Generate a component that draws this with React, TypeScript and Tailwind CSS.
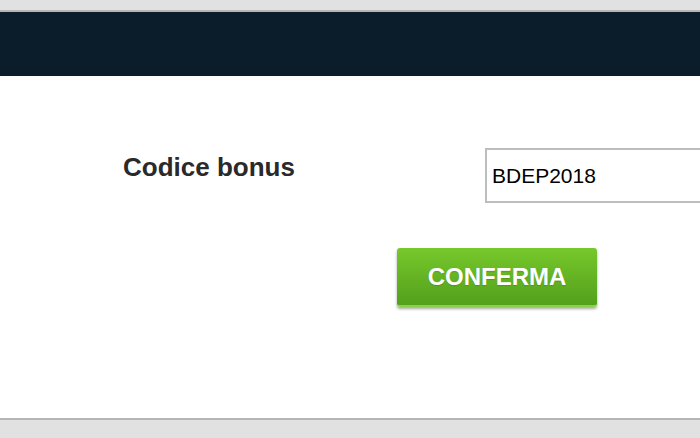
export default function App() {
  return (
    <div className="h-[438px] w-[700px] overflow-hidden flex flex-col bg-white font-['Liberation_Sans',Arial,sans-serif]">
      {/* top chrome */}
      <div className="h-[10px] bg-[#e1e1e1] border-b-2 border-[#b5b5b5] box-content" />
      <div className="h-[64px] bg-[#0b1d2b]" />

      {/* bonus form */}
      <div className="h-[342px] flex flex-col">
        <div className="flex items-start pt-[72px]">
          <div className="w-[485px] shrink-0 pl-[123px] mt-[4px] whitespace-nowrap text-[26px] leading-[30px] font-bold text-[#2a2a2a]">
            Codice bonus
          </div>
          <input
            className="w-[260px] h-[55px] shrink-0 border-2 border-[#bdbdbd] pl-[5px] text-[21px] text-black outline-none"
            defaultValue="BDEP2018"
          />
        </div>
        <div className="mt-[45px] pl-[397px]">
          <button className="w-[200px] h-[59px] rounded-[3px] bg-gradient-to-b from-[#77c82c] to-[#53a01b] border-b-2 border-[#8bd14a] shadow-[0_2px_3px_rgba(0,0,0,0.35)] text-white text-[24px] font-bold [text-shadow:0_1px_1px_rgba(0,0,0,0.15)]">
            CONFERMA
          </button>
        </div>
      </div>

      {/* footer */}
      <div className="flex-1 bg-[#e1e1e1] border-t-2 border-[#b5b5b5]" />
    </div>
  );
}
